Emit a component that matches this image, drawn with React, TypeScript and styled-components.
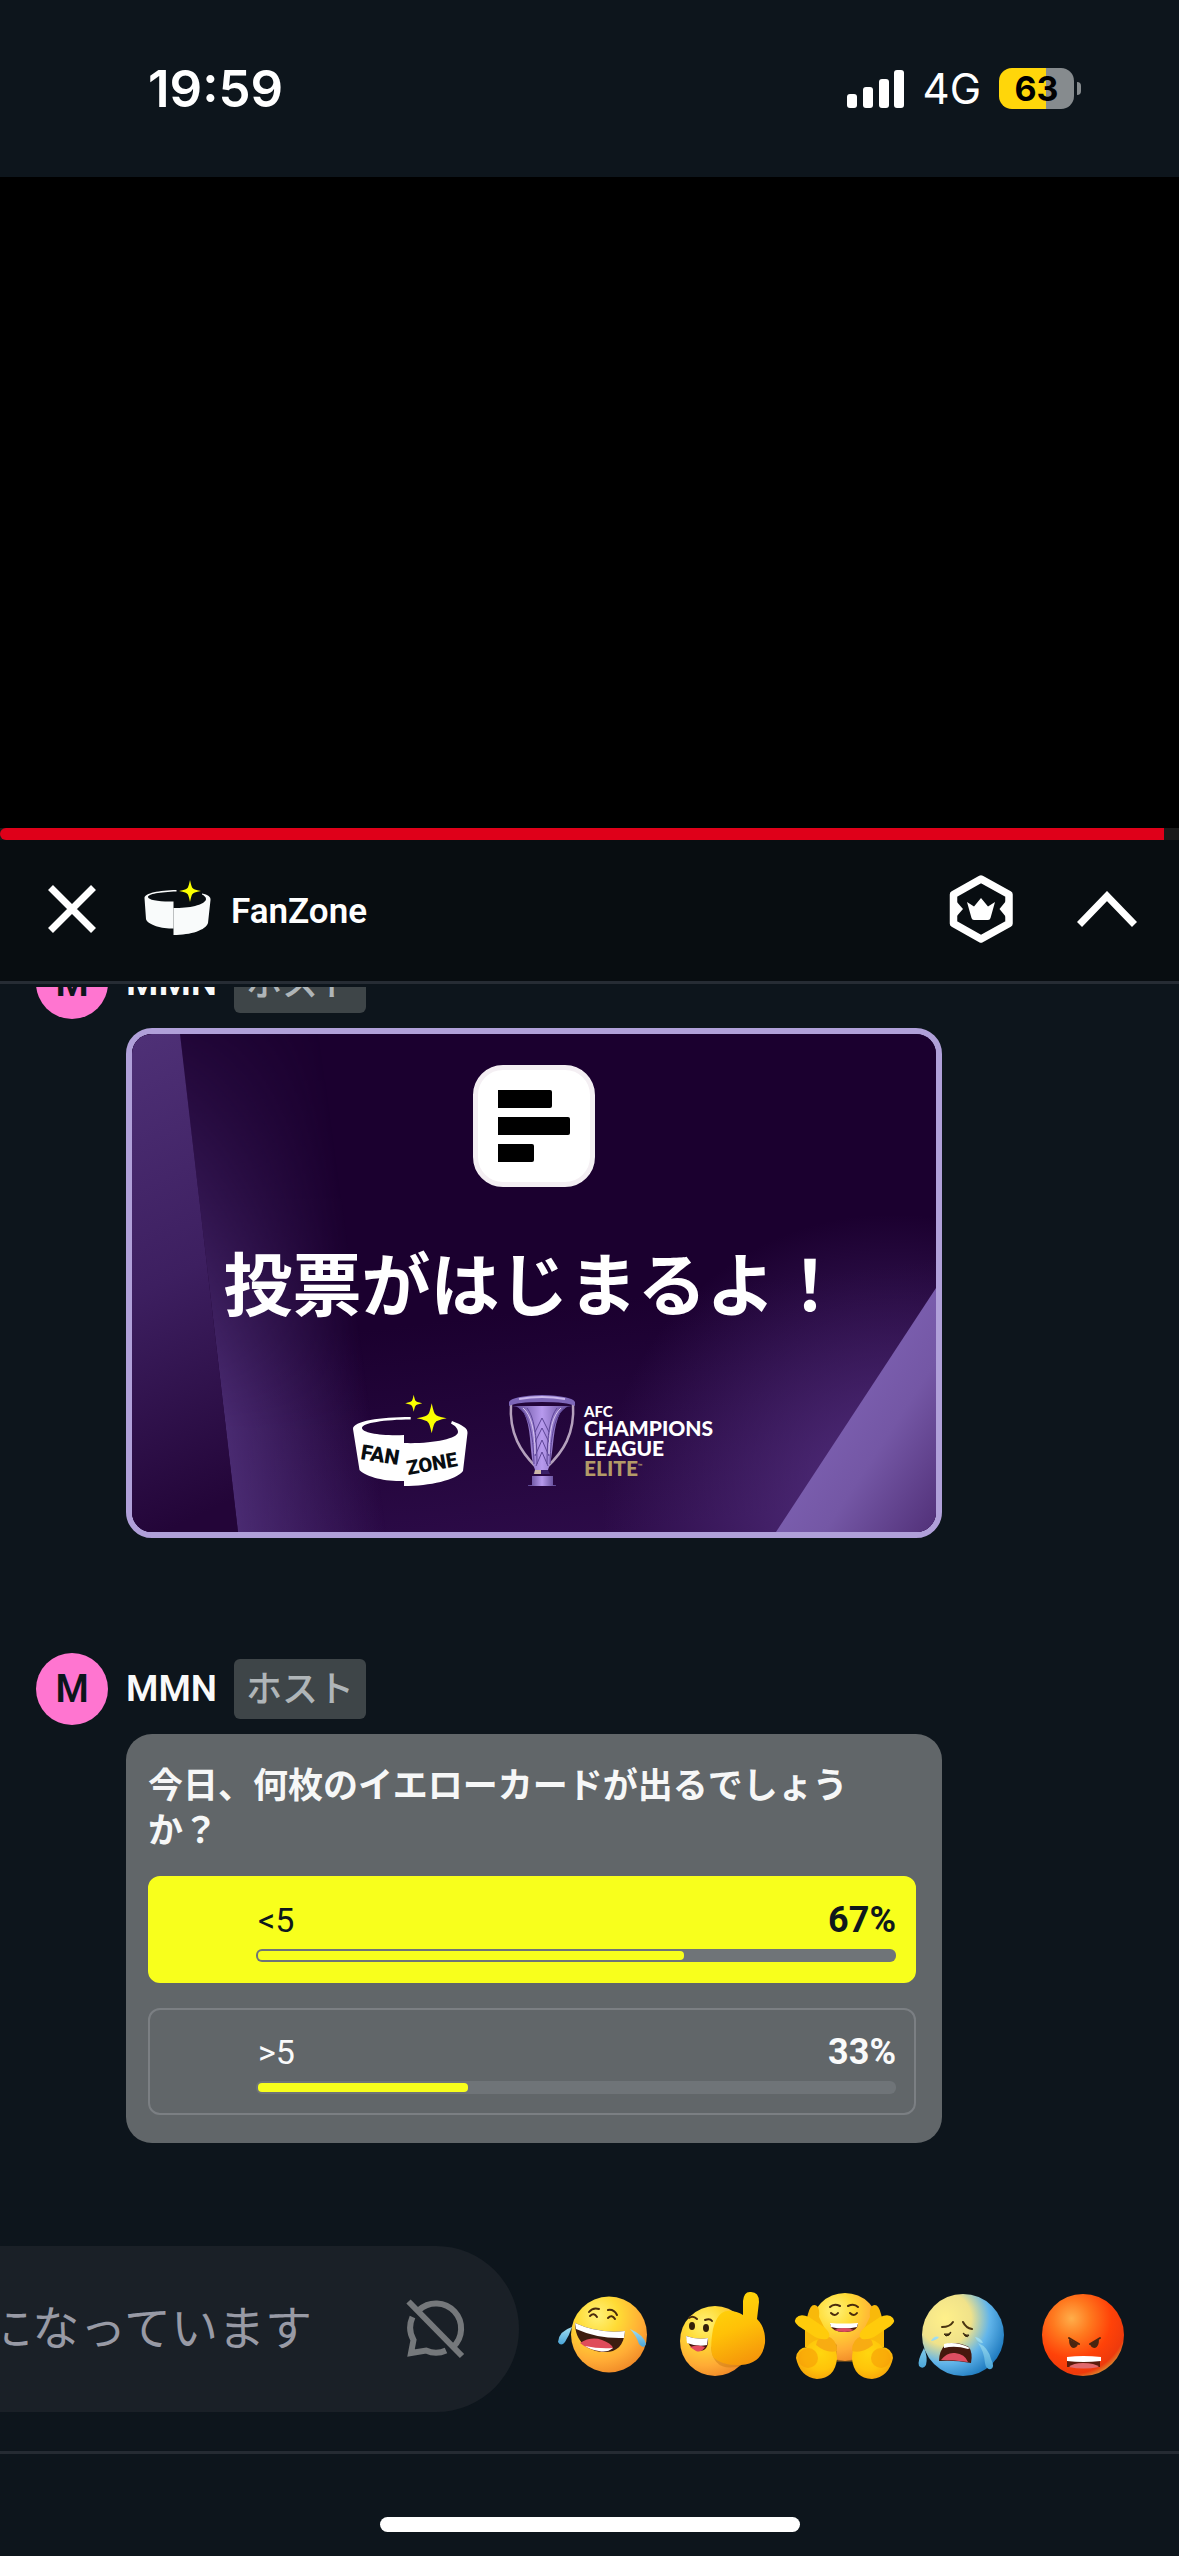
import React from "react";
import styled, { createGlobalStyle } from "styled-components";

const latin = `Roboto, "Noto Sans CJK JP", sans-serif`;
const japanese = `"Noto Sans CJK JP", "Noto Sans", sans-serif`;

const GlobalStyle = createGlobalStyle`
  * { box-sizing: border-box; }
  body { margin: 0; background: #0d151c; }
  button { border: 0; padding: 0; background: none; cursor: pointer; }
  svg { display: block; flex: none; }
`;

const Screen = styled.div`
  display: flex;
  flex-direction: column;
  height: 100vh;
  overflow: hidden;
  background: #0d151c;
  color: #fff;
  font-family: ${latin};
`;

/* ---------- status bar ---------- */

const StatusBar = styled.header`
  flex: none;
  display: flex;
  align-items: center;
  justify-content: space-between;
  height: 177px;
  padding: 0 98px 0 148px;
  font-family: Inter, sans-serif;
`;

const Clock = styled.time`
  font-size: 51px;
  font-weight: 600;
  line-height: 60px;
`;

const StatusIcons = styled.div`
  display: flex;
  align-items: center;
  gap: 18px;
`;

const Network = styled.span`
  font-size: 42px;
  line-height: 48px;
`;

const BatteryWrap = styled.div`
  display: flex;
  align-items: center;
  gap: 3px;
`;

const Battery = styled.div<{ $level: number }>`
  width: 75px;
  height: 41px;
  border-radius: 13px;
  background: linear-gradient(
    90deg,
    #ffd60a ${(p) => p.$level}%,
    #868b8e ${(p) => p.$level}%
  );
  color: #000;
  font-size: 34px;
  font-weight: 700;
  line-height: 41px;
  text-align: center;
`;

const BatteryNub = styled.div`
  width: 4px;
  height: 13px;
  border-radius: 0 4px 4px 0;
  background: #868b8e;
`;

/* ---------- player ---------- */

const Player = styled.div`
  flex: none;
  display: flex;
  align-items: flex-end;
  width: 100%;
  aspect-ratio: 16 / 9;
  background: #000;
`;

const Track = styled.div`
  width: 100%;
  height: 12px;
  background: #1a1a1a;
`;

const Played = styled.div`
  height: 12px;
  border-radius: 6px 0 0 6px;
  background: #df0019;
`;

/* ---------- FanZone bar ---------- */

const ZoneBar = styled.div`
  flex: none;
  display: flex;
  align-items: center;
  height: 144px;
  padding: 0 42px 4px 48px;
  border-bottom: 3px solid #262c34;
  background: #080d11;
`;

const Brand = styled.div`
  display: flex;
  align-items: center;
  gap: 18px;
  margin-left: 47px;
`;

const BrandName = styled.h1`
  margin: 0;
  padding-top: 7px;
  font-size: 35px;
  font-weight: 600;
  line-height: 44px;
`;

const BarActions = styled.div`
  display: flex;
  align-items: center;
  gap: 61px;
  margin-left: auto;
`;

/* ---------- chat ---------- */

const Chat = styled.main`
  flex: 1 1 0;
  min-height: 0;
  margin-top: 3px;
  padding: 0 36px 69px;
  display: flex;
  flex-direction: column;
  justify-content: flex-end;
  gap: 115px;
  overflow: hidden;
`;

const Message = styled.article`
  flex: none;
  display: flex;
  flex-direction: column;
  gap: 9px;
`;

const Author = styled.div`
  display: flex;
  align-items: center;
`;

const Avatar = styled.span`
  width: 72px;
  height: 72px;
  margin-right: 18px;
  border-radius: 50%;
  background: #ff75d0;
  color: #0d151c;
  font-size: 38px;
  font-weight: 600;
  line-height: 72px;
  text-align: center;
`;

const AuthorName = styled.strong`
  width: 90px;
  margin-right: 18px;
  color: #f9fafa;
  font-size: 37px;
  font-weight: 600;
  line-height: 60px;
`;

const HostBadge = styled.span`
  height: 60px;
  padding: 0 12px;
  border-radius: 6px;
  background: #3e4548;
  color: #afb5b8;
  font: 500 36px/54px ${japanese};
`;

const Attachment = styled.div`
  width: 816px;
  max-width: 100%;
  margin-left: 90px;
  border-radius: 26px;
  overflow: hidden;
`;

/* announcement picture */

const Banner = styled(Attachment)`
  position: relative;
  display: flex;
  flex-direction: column;
  align-items: center;
  padding: 31px 0 44px;
  border: 6px solid #b0a0d9;
  background: #1b002f;
`;

const BannerArt = styled.svg`
  position: absolute;
  inset: 0;
  width: 100%;
  height: 100%;
`;

const PollIcon = styled.div`
  position: relative;
  display: flex;
  flex-direction: column;
  gap: 9px;
  width: 122px;
  height: 122px;
  padding: 20px;
  border: 5px solid #f4eff3;
  border-radius: 30px;
  background: #fff;
`;

const PollIconBar = styled.span<{ $width: number }>`
  width: ${(p) => p.$width}px;
  height: 18px;
  border-radius: 0 2px 2px 0;
  background: #000;
`;

const BannerTitle = styled.h2`
  position: relative;
  margin: 54px 0 73px;
  font: 700 69px/80px ${japanese};
  white-space: nowrap;
`;

const Sponsors = styled.div`
  position: relative;
  display: flex;
  align-items: center;
  height: 94px;
  margin-right: 5px;
`;

const League = styled.p`
  display: flex;
  flex-direction: column;
  margin: 0 0 0 7px;
  font: 900 21px/20px Lato, sans-serif;
`;

const LeagueTop = styled.span`
  font-size: 15px;
  line-height: 14px;
`;

const LeagueTier = styled.span`
  color: #b39b68;
`;

const TradeMark = styled.sup`
  font-size: 6px;
  line-height: 6px;
  vertical-align: 8px;
`;

/* poll */

const Poll = styled(Attachment)`
  padding: 26px 26px 28px 22px;
  background: #616669;
`;

const Question = styled.h2`
  max-width: 720px;
  margin: 0 0 26px;
  color: #f6f7f7;
  font: 700 35px/45px ${japanese};
`;

const Options = styled.ul`
  display: flex;
  flex-direction: column;
  gap: 25px;
  margin: 0;
  padding: 0;
  list-style: none;
`;

const Option = styled.li<{ $picked: boolean }>`
  display: flex;
  flex-direction: column;
  gap: 8px;
  height: 107px;
  padding: 21px 18px 0 106px;
  border: 2px solid ${(p) => (p.$picked ? "#f8ff1c" : "#7b7f83")};
  border-radius: 12px;
  background: ${(p) => (p.$picked ? "#f8ff1c" : "transparent")};
  color: ${(p) => (p.$picked ? "#0f181c" : "#f9fafa")};
`;

const OptionText = styled.div`
  display: flex;
  justify-content: space-between;
  padding-left: 2px;
  font-size: 34px;
  line-height: 42px;
`;

const Share = styled.strong`
  font-size: 36px;
`;

const Meter = styled.div`
  height: 13px;
  padding: 2px;
  border-radius: 6px;
  background: #6f7478;
`;

const MeterFill = styled.div`
  height: 9px;
  border-radius: 4px;
  background: #f8ff1c;
`;

/* ---------- composer ---------- */

const Composer = styled.footer`
  flex: none;
  display: flex;
  align-items: center;
  justify-content: flex-end;
  padding: 34px 36px 39px 0;
  border-bottom: 3px solid #252b33;
  overflow: hidden;
`;

const Field = styled.label`
  flex: none;
  display: flex;
  align-items: center;
  justify-content: flex-end;
  width: 620px;
  height: 166px;
  padding-right: 53px;
  border-radius: 83px;
  background: #1a2027;
`;

const FieldInput = styled.input`
  width: 360px;
  margin-right: 94px;
  padding: 0 0 8px;
  border: 0;
  background: none;
  font: 400 47px/70px ${japanese};
  text-align: right;
  &::placeholder {
    color: #989aa5;
    opacity: 1;
  }
`;

const Reactions = styled.div`
  flex: none;
  display: flex;
  margin-left: 24px;
`;

const HomeArea = styled.div`
  flex: none;
  display: flex;
  justify-content: center;
  height: 102px;
  padding-top: 63px;
`;

const HomeIndicator = styled.div`
  width: 420px;
  height: 15px;
  border-radius: 8px;
  background: #fff;
`;

/* ---------- drawings ---------- */

const star = (x: number, y: number, r: number) => {
  const k = r * 0.26;
  return `M${x} ${y - r}Q${x + k * 0.6} ${y - k} ${x + k} ${y - k}Q${x + k} ${y - k * 0.6} ${x + r} ${y}Q${x + k} ${y + k * 0.6} ${x + k} ${y + k}Q${x + k * 0.6} ${y + k} ${x} ${y + r}Q${x - k * 0.6} ${y + k} ${x - k} ${y + k}Q${x - k} ${y + k * 0.6} ${x - r} ${y}Q${x - k} ${y - k * 0.6} ${x - k} ${y - k}Q${x - k * 0.6} ${y - k} ${x} ${y - r}Z`;
};

const SignalIcon = () => (
  <svg width="58" height="38" fill="#fff" aria-label="signal">
    <rect x="0" y="24" width="10" height="14" rx="3" />
    <rect x="16" y="17" width="10" height="21" rx="3" />
    <rect x="32" y="9" width="10" height="29" rx="3" />
    <rect x="47" y="0" width="10" height="38" rx="3" />
  </svg>
);

const CloseIcon = () => (
  <svg width="48" height="48" stroke="#fff" strokeWidth="7">
    <path d="M2.500 2.500L45.500 45.500M45.500 2.500L2.500 45.500" />
  </svg>
);

const BrandLogo = () => (
  <svg width="70" height="60" fill="#f9fbfb">
    <path d="M33.500 11C16 11.500 1.500 14 1.500 19L3 40C4 45 17 50 30.500 49.500V22.500C17 23 5 21 5 18C5 15 17 13 33.500 12.500Z" />
    <path d="M59 14.500C65 15.500 68 18 67.500 21L65 44C63 51 48 56 30.500 56V29C48 29.500 63 25 63 20C63 18 61 16.500 59 15.500Z" />
    <path d={star(47, 12, 11)} fill="#faff00" />
  </svg>
);

const CrownIcon = () => (
  <svg width="70" height="72" fill="#fff">
    <path
      d="M35 6L63 21.500V50.500L35 66L7.500 50.500V21.500Z"
      fill="none"
      stroke="#fff"
      strokeWidth="7.500"
      strokeLinejoin="round"
    />
    <path d="M10 28L17 36L10 44ZM60 28L53.500 36L60 44Z" />
    <path d="M21 29L28 33.500L35 25L42 33.500L49 29L44.500 45Q44 47 42 47H28Q26 47 25.500 45Z" />
  </svg>
);

const ChevronUpIcon = () => (
  <svg width="60" height="36" fill="none" stroke="#fff" strokeWidth="7">
    <path d="M2.500 33.500L30 5L57.500 33.500" />
  </svg>
);

const FanZoneLogo = () => (
  <svg width="120" height="94" fill="#fff" aria-label="FANZONE">
    <path d="M60.700 23C30 23 3 27 3 35L9.500 76C14 82 35 88 54 87V41C32 42 12 39 12 34C12 29 35 25.500 60.700 25.500Z" />
    <path d="M102 27C112 31 118 34 117.500 39L113 77C106 86 80 92 54 92V49C80 50 108 45 108 38C108 34 104 31 101 29.500Z" />
    <path d={star(81.7, 24.3, 15)} fill="#faff00" />
    <path d={star(63.7, 9.3, 8.5)} fill="#faff00" />
    <g fill="#080d11" fontFamily="Roboto, sans-serif" fontWeight="900">
      <text x="10" y="65" fontSize="21" transform="rotate(9 10 65)">
        FAN
      </text>
      <text x="58" y="81" fontSize="20" transform="rotate(-10 58 81)">
        ZONE
      </text>
    </g>
  </svg>
);

const Trophy = () => (
  <svg width="70" height="94">
    <defs>
      <linearGradient id="cup" x1="0" x2="1">
        <stop offset="0" stopColor="#57428c" />
        <stop offset=".5" stopColor="#b79aee" />
        <stop offset="1" stopColor="#57428c" />
      </linearGradient>
    </defs>
    <path d="M4 10C2 40 14 58 29 73M66 10C68 40 56 58 40 73" fill="none" stroke="#b5a1bd" strokeWidth="2.500" />
    <path d="M5 12Q15 12 19 24C25 40 22 60 28 76H41C47 60 45 40 51 24Q55 12 65 12Z" fill="url(#cup)" />
    <g fill="none" stroke="#5d4596" strokeWidth="1">
      <path d="M12 14Q26 22 27 70M20 14Q30 26 30 70M58 14Q44 22 43 70M50 14Q40 26 40 70" />
      <path d="M28 38L35 24L42 38M27 50L35 34L43 50M28 62L35 46L42 62M29 72L35 58L41 72" />
    </g>
    <path d="M16 14Q28 24 28 60M54 14Q42 24 42 60" fill="none" stroke="#d6c4ee" />
    <path d="M2 8Q5 2 35 1Q65 2 68 8V12Q60 8 35 8Q10 8 2 12Z" fill="#7d66b8" />
    <path d="M12 5Q35 1 58 5" fill="none" stroke="#cbb8ee" strokeWidth="2" />
    <path d="M28 76H41L43 80H26Z" fill="#3a2168" />
    <path d="M28 76H34V80H27Z" fill="#cdb8a8" />
    <path d="M25 82H46V91H49V92H21V91H25Z" fill="url(#cup)" />
  </svg>
);

const MutedChatIcon = () => (
  <svg width="60" height="60" fill="none" stroke="#75787b" strokeWidth="6">
    <path d="M13 11A24.500 24.500 0 0 1 47 48" />
    <path d="M6.500 18C3 26 3.500 34 7.500 41L5 54L20 51.500Q30 56 40 51.500" />
    <path d="M2.500 2.500L56 57" />
  </svg>
);

const EmojiDefs = () => (
  <svg width="0" height="0" aria-hidden="true">
    <defs>
      <radialGradient id="gold" cx=".35" cy=".25" r=".8">
        <stop offset="0" stopColor="#fff27a" />
        <stop offset=".35" stopColor="#ffdb35" />
        <stop offset=".75" stopColor="#ffab35" />
        <stop offset="1" stopColor="#f08a28" />
      </radialGradient>
      <linearGradient id="hand" x1=".3" y1="0" x2=".6" y2="1">
        <stop offset="0" stopColor="#ffd90c" />
        <stop offset=".5" stopColor="#ffc107" />
        <stop offset="1" stopColor="#f5950a" />
      </linearGradient>
      <radialGradient id="palm" cx=".6" cy=".35" r=".7">
        <stop offset="0" stopColor="#ffd60f" />
        <stop offset=".6" stopColor="#ffc40a" />
        <stop offset="1" stopColor="#f6a30a" />
      </radialGradient>
      <radialGradient id="sad" cx=".28" cy=".3" r=".8">
        <stop offset="0" stopColor="#fff08a" />
        <stop offset=".4" stopColor="#f0e28a" />
        <stop offset=".68" stopColor="#62b5ea" />
        <stop offset="1" stopColor="#1c78bd" />
      </radialGradient>
      <radialGradient id="rage" cx=".36" cy=".3" r=".75">
        <stop offset="0" stopColor="#ffae4a" />
        <stop offset=".3" stopColor="#ff7a1f" />
        <stop offset=".65" stopColor="#ff4208" />
        <stop offset=".9" stopColor="#ee3a0c" />
        <stop offset="1" stopColor="#d98a30" />
      </radialGradient>
      <linearGradient id="tear" x1="0" y1="0" x2="0" y2="1">
        <stop offset="0" stopColor="#a3e0f2" />
        <stop offset="1" stopColor="#4aa5d8" />
      </linearGradient>
    </defs>
  </svg>
);

const LaughFace = () => (
  <svg width="120" height="120">
    <circle cx="66" cy="65.500" r="38" fill="url(#gold)" />
    <path d="M32 54Q56 65 82 62C81 78 72 84 60 83C44 82 32 72 32 54Z" fill="#3d1d10" />
    <path d="M32 54Q56 65 82 62L81 69Q55 70 33 60Z" fill="#fff" />
    <path d="M37 74Q48 67 59 71Q68 74 70 79Q64 83 56 82Q44 80 37 74Z" fill="#df4b5b" />
    <path d="M42 77Q56 80 70 79Q64 84 56 82Q48 81 42 77Z" fill="#fff" />
    <g fill="none" stroke="#4a2b0c" strokeWidth="2" strokeLinecap="round">
      <path d="M46 43Q50 38 56 40M65 41Q71 40 74 46M47 47Q51 43 54 48M65 49Q69 45 72 50" />
    </g>
    <path d="M29 58Q16 62 15 73Q18 78 22 73Q26 67 29 58Z" fill="url(#tear)" />
    <path d="M87 60Q101 66 103 75Q101 81 96 75Q93 66 87 60Z" fill="url(#tear)" />
  </svg>
);

const ThumbFace = () => (
  <svg width="120" height="120">
    <circle cx="52" cy="72" r="35" fill="url(#gold)" />
    <path d="M48 78Q50 104 78 97L80 60Z" fill="#c97912" opacity=".5" />
    <path d="M23 67Q34 71 45 69Q46 82 36 82Q25 80 23 67Z" fill="#4a180e" />
    <path d="M23 67Q34 71 45 69L44 76Q34 78 24 74Z" fill="#fff" />
    <path d="M27 78Q35 75 42 78Q38 84 33 82Z" fill="#e44c5e" />
    <g fill="#33200a">
      <ellipse cx="29" cy="57" rx="3" ry="4" />
      <ellipse cx="43" cy="59" rx="3" ry="4" />
    </g>
    <path d="M26 49Q30 46 34 50M42 51Q47 49 49 52" fill="none" stroke="#4a2b0c" strokeWidth="2" strokeLinecap="round" />
    <path d="M80 53V32Q81 22 88 23Q96 23 96 33L94 50Q103 59 102 74Q99 95 78 96Q60 97 51 89Q46 84 50 60Q55 41 66 42Q74 42 80 46Z" fill="url(#hand)" />
  </svg>
);

const HugHand = () => (
  <g>
    <path d="M25 45Q28 33 34 37Q37 40 36 48L44 64L42 78L22 78V56Z" fill="#f9b90a" />
    <path d="M13 89Q14 79 24 78Q30 70 40 70Q54 72 54 90Q52 109 34 110Q17 108 13 89Z" fill="url(#palm)" />
    <path d="M33 76Q34 67 44 67Q54 70 54 82Q44 85 33 76Z" fill="#f8ac12" />
    <path d="M20 60Q9 54 13 49Q17 44 26 48L41 58Q50 66 44 70Q38 71 32 68Z" fill="#ffcb0b" />
    <circle cx="25" cy="89" r="10" fill="#f69c06" opacity=".6" />
  </g>
);

const HugFace = () => (
  <svg width="120" height="120">
    <circle cx="62" cy="58" r="34" fill="url(#gold)" />
    <path d="M38 62L54 76V90Q62 94 70 90V76L86 62L78 84L70 93H54L46 84Z" fill="#b87414" opacity=".45" />
    <path d="M47 55Q60 58 75 55Q74 63 61 63Q49 63 47 55Z" fill="#4a180e" />
    <path d="M47 54Q60 55 75 54L74 58Q60 61 48 58Z" fill="#fff" />
    <path d="M51 61Q61 57 71 61Q62 65 51 61Z" fill="#dc4b60" />
    <g fill="none" stroke="#4a2b0c" strokeWidth="2" strokeLinecap="round">
      <path d="M47 38Q51 34 57 37M65 37Q71 34 75 38M48 44Q52 48 55 44M67 44Q71 48 74 44" />
    </g>
    <HugHand />
    <g transform="translate(123 0) scale(-1 1)">
      <HugHand />
    </g>
  </svg>
);

const CryFace = () => (
  <svg width="120" height="120">
    <circle cx="60" cy="66" r="41" fill="url(#sad)" />
    <path d="M42 76Q52 71 66 78Q70 84 68 94Q52 91 36 92Q36 82 42 76Z" fill="#46180e" />
    <path d="M41 75Q53 72 67 79L65 80Q52 76 41 79Z" fill="#fff" />
    <path d="M38 91Q44 83 52 84Q62 85 65 93Q52 91 38 91Z" fill="#de4e61" />
    <g fill="none" stroke="#4a3511" strokeWidth="2" strokeLinecap="round">
      <path d="M39 58Q47 58 50 53M60 53Q63 59 69 60" />
    </g>
    <path d="M41 65Q46 66 48 63Q47 67 43 67ZM60 64Q63 67 66 66Q65 69 62 67Z" fill="#38270e" stroke="#38270e" />
    <path d="M21 79Q14 92 16 97Q20 101 23 96Q25 88 21 79ZM28 72Q31 66 36 68Q34 71 28 72Z" fill="url(#tear)" />
    <path d="M75 74Q85 78 88 90Q92 98 88 100Q83 101 82 94Q81 82 75 74ZM72 68Q78 69 80 74Q75 74 72 68Z" fill="url(#tear)" />
  </svg>
);

const RageFace = () => (
  <svg width="120" height="120">
    <circle cx="60" cy="66" r="41" fill="url(#rage)" />
    <path d="M44 89H77V98H44Z" fill="#5a1c0c" />
    <path d="M44 88Q60 86 78 88V92Q60 94 44 92Z" fill="#fff" />
    <path d="M46 98Q50 94 60 94Q72 94 76 98Q60 101 46 98Z" fill="#e06a6e" />
    <path d="M46 70Q50 72 55 75Q54 79 50 79Q46 78 46 70ZM76 70Q72 72 67 75Q68 79 72 79Q76 78 76 70Z" fill="#4a2510" />
    <path d="M46 69L56 75M77 69L67 75" stroke="#4a2510" strokeWidth="2" strokeLinecap="round" />
  </svg>
);

/* ---------- content ---------- */

const options = [
  { label: "<5", share: 67, picked: true },
  { label: ">5", share: 33, picked: false },
];

const reactions = [
  { name: "laugh", Face: LaughFace },
  { name: "thumbs up", Face: ThumbFace },
  { name: "hug", Face: HugFace },
  { name: "cry", Face: CryFace },
  { name: "angry", Face: RageFace },
];

const AuthorLine = () => (
  <Author>
    <Avatar>M</Avatar>
    <AuthorName>MMN</AuthorName>
    <HostBadge>ホスト</HostBadge>
  </Author>
);

export default function App() {
  return (
    <Screen>
      <GlobalStyle />
      <StatusBar>
        <Clock>19:59</Clock>
        <StatusIcons>
          <SignalIcon />
          <Network>4G</Network>
          <BatteryWrap>
            <Battery $level={63}>63</Battery>
            <BatteryNub />
          </BatteryWrap>
        </StatusIcons>
      </StatusBar>

      <Player>
        <Track>
          <Played style={{ width: "98.7%" }} />
        </Track>
      </Player>

      <ZoneBar>
        <button aria-label="close">
          <CloseIcon />
        </button>
        <Brand>
          <BrandLogo />
          <BrandName>FanZone</BrandName>
        </Brand>
        <BarActions>
          <button aria-label="ranking">
            <CrownIcon />
          </button>
          <button aria-label="expand">
            <ChevronUpIcon />
          </button>
        </BarActions>
      </ZoneBar>

      <Chat>
        <Message>
          <AuthorLine />
          <Banner>
            <BannerArt viewBox="0 0 804 498" preserveAspectRatio="none" aria-hidden="true">
              <defs>
                <linearGradient id="base" x1=".4" y1="0" x2=".6" y2="1">
                  <stop offset=".55" stopColor="#1b002f" />
                  <stop offset="1" stopColor="#2c0b48" />
                </linearGradient>
                <linearGradient id="band" x1=".2" y1="0" x2=".3" y2="1">
                  <stop offset="0" stopColor="#4e3076" />
                  <stop offset=".5" stopColor="#3d1f60" />
                  <stop offset="1" stopColor="#230538" />
                </linearGradient>
                <linearGradient id="glow" gradientUnits="userSpaceOnUse" x1="70" y1="260" x2="220" y2="240">
                  <stop offset="0" stopColor="#4b2c73" />
                  <stop offset="1" stopColor="#4b2c73" stopOpacity="0" />
                </linearGradient>
                <linearGradient id="glowFade" x1="0" y1="0" x2="0" y2="1">
                  <stop offset="0" stopColor="#fff" stopOpacity=".15" />
                  <stop offset=".8" stopColor="#fff" />
                </linearGradient>
                <mask id="glowMask">
                  <rect width="804" height="498" fill="url(#glowFade)" />
                </mask>
                <radialGradient id="corner" gradientUnits="userSpaceOnUse" cx="760" cy="470" r="290">
                  <stop offset="0" stopColor="#53307f" />
                  <stop offset="1" stopColor="#53307f" stopOpacity="0" />
                </radialGradient>
                <linearGradient id="wedge" x1=".3" y1=".3" x2="1" y2="1">
                  <stop offset="0" stopColor="#8064b6" />
                  <stop offset=".5" stopColor="#7457a5" />
                  <stop offset="1" stopColor="#513078" />
                </linearGradient>
              </defs>
              <rect width="804" height="498" fill="url(#base)" />
              <rect width="804" height="498" fill="url(#corner)" />
              <g mask="url(#glowMask)">
                <path d="M48 0H400V498H106Z" fill="url(#glow)" />
              </g>
              <path d="M0 0H48L106 498H0Z" fill="url(#band)" />
              <path d="M804 254V498H644Z" fill="url(#wedge)" />
            </BannerArt>
            <PollIcon>
              <PollIconBar $width={54} />
              <PollIconBar $width={72} />
              <PollIconBar $width={36} />
            </PollIcon>
            <BannerTitle>投票がはじまるよ！</BannerTitle>
            <Sponsors>
              <FanZoneLogo />
              <svg width="37" height="1" aria-hidden="true" />
              <Trophy />
              <League>
                <LeagueTop>AFC</LeagueTop>
                <span>CHAMPIONS</span>
                <span>LEAGUE</span>
                <LeagueTier>
                  ELITE<TradeMark>™</TradeMark>
                </LeagueTier>
              </League>
            </Sponsors>
          </Banner>
        </Message>

        <Message>
          <AuthorLine />
          <Poll>
            <Question>今日、何枚のイエローカードが出るでしょうか？</Question>
            <Options>
              {options.map((o) => (
                <Option key={o.label} $picked={o.picked}>
                  <OptionText>
                    <span>{o.label}</span>
                    <Share>{o.share}%</Share>
                  </OptionText>
                  <Meter>
                    <MeterFill style={{ width: `${o.share}%` }} />
                  </Meter>
                </Option>
              ))}
            </Options>
          </Poll>
        </Message>
      </Chat>

      <Composer>
        <Field>
          <FieldInput placeholder="になっています" aria-label="メッセージ" disabled />
          <MutedChatIcon />
        </Field>
        <Reactions>
          <EmojiDefs />
          {reactions.map(({ name, Face }) => (
            <button key={name} aria-label={name}>
              <Face />
            </button>
          ))}
        </Reactions>
      </Composer>

      <HomeArea>
        <HomeIndicator />
      </HomeArea>
    </Screen>
  );
}
